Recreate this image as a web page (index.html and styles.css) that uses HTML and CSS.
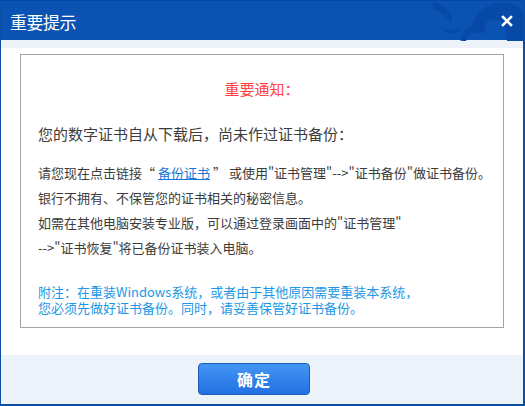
FILE: index.html
```html
<!DOCTYPE html>
<html lang="zh-CN">
<head>
<meta charset="utf-8">
<title>重要提示</title>
<link rel="stylesheet" href="styles.css">
</head>
<body>
<div class="window">
  <div class="titlebar">
    <svg class="deco" width="120" height="40" viewBox="0 0 120 40">
      <path d="M95 2 C112 0 122 8 122 20 L122 40 L104 40 C104 28 100 20 92 18 C84 17 80 24 82 32 L70 32 C66 18 78 4 95 2 Z" fill="#0749a6"/>
      <path d="M60 40 C62 30 70 26 80 27" stroke="#0749a6" stroke-width="6" fill="none"/>
      <path d="M30 0 C44 6 52 14 48 24 C46 18 40 12 30 8 Z" fill="#0749a6"/>
      <path d="M38 26 C44 30 52 30 58 26 C54 34 44 36 38 26 Z" fill="#0749a6"/>
    </svg>
    <span class="title">重要提示</span>
    <svg class="close" width="12" height="12" viewBox="0 0 12 12">
      <path d="M2 2 L10 10 M10 2 L2 10" stroke="#fff" stroke-width="2.6" stroke-linecap="square"/>
    </svg>
  </div>
  <div class="band"></div>
  <div class="main">
    <div class="box">
      <div class="notice">重要通知：</div>
      <div class="intro">您的数字证书自从下载后，尚未作过证书备份：</div>
      <div class="para">
        <div>请您现在点击链接“<a class="link" href="#">备份证书</a>” 或使用"证书管理"--&gt;"证书备份"做证书备份。</div>
        <div>银行不拥有、不保管您的证书相关的秘密信息。</div>
        <div>如需在其他电脑安装专业版，可以通过登录画面中的"证书管理"</div>
        <div>--&gt;"证书恢复"将已备份证书装入电脑。</div>
      </div>
      <div class="note">
        <div class="note-line">附注：在重装Windows系统，或者由于其他原因需要重装本系统，</div>
        <div class="note-line">您必须先做好证书备份。同时，请妥善保管好证书备份。</div>
      </div>
    </div>
  </div>
  <div class="footer">
    <button class="ok">确定</button>
  </div>
</div>
</body>
</html>
```

FILE: styles.css
```css
* { box-sizing: border-box; }
html, body { margin: 0; padding: 0; background: #fff; }
body {
  font-family: "Noto Sans CJK SC", "Noto Sans", "Liberation Sans", sans-serif;
  color: #3a3a3a;
}
.window {
  width: 525px;
  height: 406px;
  border-left: 1px solid #0a4ea8;
  border-right: 2px solid #0a4ea8;
  border-bottom: 2px solid #0a4ea8;
  display: flex;
  flex-direction: column;
  overflow: hidden;
}
.titlebar {
  position: relative;
  height: 40px;
  flex: none;
  background: #0b53b3;
  border-top: 1px solid #0546a6;
  display: flex;
  align-items: center;
  padding-left: 9px;
  padding-right: 10px;
}
.deco {
  position: absolute;
  right: 0;
  top: 0;
}
.title {
  position: relative;
  color: #fff;
  font-size: 17px;
  line-height: 20px;
  margin-top: 2px;
  letter-spacing: -0.5px;
}
.close {
  position: relative;
  margin-left: auto;
  margin-top: 1px;
}
.band {
  height: 8px;
  flex: none;
  background: #edf3f9;
}
.main {
  flex: none;
  height: 307px;
  padding: 6px 19px 0 19px;
  background: #fff;
}
.box {
  height: 274px;
  border: 1px solid #a3a3a3;
  padding: 24px 0 0 17px;
}
.notice {
  font-size: 15px;
  line-height: 20px;
  color: #ff4242;
  text-align: center;
  padding-right: 17px;
}
.intro {
  margin-top: 25px;
  font-size: 15px;
  line-height: 20px;
  color: #3c3c3c;
}
.para {
  margin-top: 16px;
  font-size: 13px;
  line-height: 25px;
  color: #3c3c3c;
}
.link {
  color: #1677d8;
  text-decoration: underline;
  margin: 0 3px;
}
.note {
  margin-top: 24px;
  font-size: 13px;
  color: #1c98e6;
}
.note-line {
  height: 16px;
  line-height: 16px;
  overflow: visible;
}
.footer {
  flex: 1;
  background: #edf3fa;
  display: flex;
  justify-content: center;
  align-items: flex-start;
  padding-top: 8px;
}
.ok {
  width: 112px;
  height: 32px;
  margin-right: 16px;
  border: 1px solid #1b5db5;
  border-radius: 4px;
  background: linear-gradient(#4396f3, #2270e3);
  color: #fff;
  font-family: "Noto Sans CJK SC", sans-serif;
  font-size: 16px;
  font-weight: bold;
  letter-spacing: 1px;
  padding: 0;
}
```
